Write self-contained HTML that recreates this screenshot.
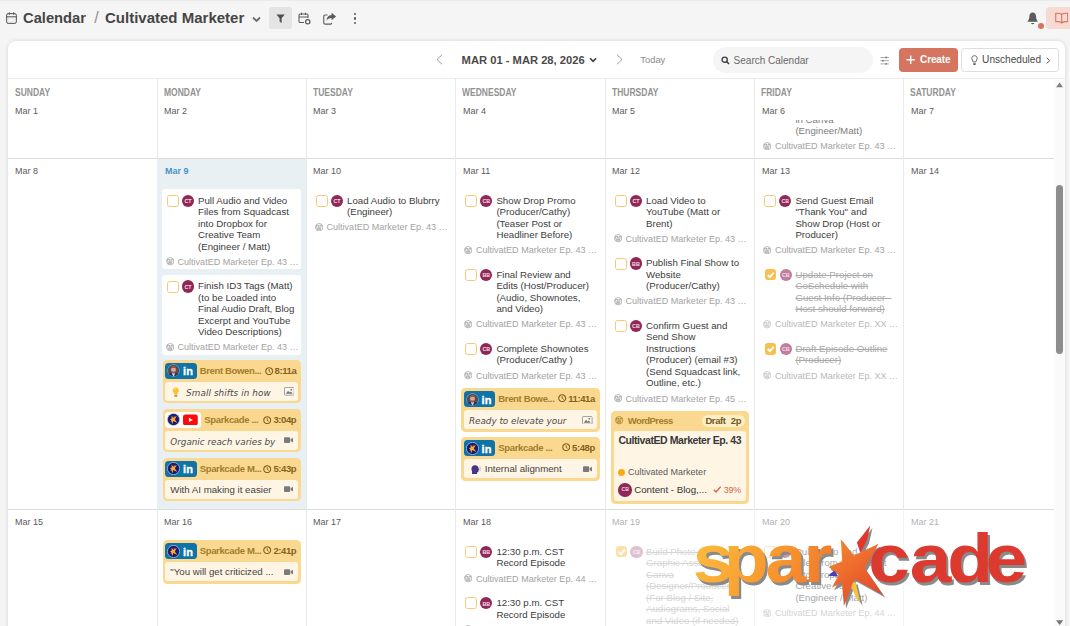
<!DOCTYPE html>
<html lang="en">
<head>
<meta charset="utf-8">
<title>Calendar / Cultivated Marketer</title>
<style>
*{box-sizing:border-box;margin:0;padding:0}
html,body{width:1070px;height:626px;overflow:hidden;background:#f5f5f5;font-family:"Liberation Sans",sans-serif;color:#3b3b3b}
body{position:relative}
.a{position:absolute;white-space:nowrap}
.t{position:absolute;white-space:nowrap;transform-origin:0 0}
#card{left:8px;top:41px;width:1057px;height:600px;background:#fff;border-radius:8px 8px 0 0;box-shadow:0 0 4px rgba(0,0,0,.14)}
.vl{position:absolute;width:1px;background:#e9e9e9;top:79px;height:547px}
.hl{position:absolute;height:1px;background:#dcdcdc;left:8px;width:1046px}
.dow{position:absolute;font-size:10px;font-weight:bold;color:#929292;line-height:10px;white-space:nowrap;transform:scaleX(.85);transform-origin:0 0}
.day{position:absolute;font-size:9.9px;color:#5a5a5a;line-height:10px;white-space:nowrap;transform:scaleX(.91);transform-origin:0 0}
.tk{position:absolute;width:140px}
.cb{position:absolute;left:5px;top:0;width:12px;height:12px;border:1.4px solid #f6c976;border-radius:2.6px;background:#fff}
.cb.on{background:#f9bf4d;border-color:#f9bf4d;left:5.9px;width:11.1px;height:11.3px}
.done .av{left:20.4px}
.av{position:absolute;left:19.8px;top:-.2px;width:12.2px;height:12.2px;border-radius:50%;background:#902857;color:#f3dbe6;font-size:5.4px;line-height:12.2px;padding-top:.3px;text-align:center;font-weight:bold;letter-spacing:-.1px}
.tx{position:absolute;left:36px;top:-.4px;font-size:9.7px;line-height:11.5px;color:#3c3c3c;white-space:nowrap}
.sb{position:absolute;left:15.5px;font-size:9.05px;line-height:10px;color:#a3a3a3;white-space:nowrap}
.wp{position:absolute;left:3.7px;width:8.4px;height:8.4px}
.past .tx{color:#7c7c7c}
.done .tx{color:#a9a9a9;text-decoration:line-through}
.done .av{background:#bd7f9c}
.done .sb{color:#b9b9b9}
.wcard{position:absolute;background:#fff;border-radius:3px;left:162.3px;width:138.7px}
.sc{position:absolute;width:138.6px;height:43.4px;border-radius:4.5px;background:#fbd88f}
.sc .body{position:absolute;left:2.8px;top:22.3px;width:132.9px;height:18.8px;border-radius:3px;background:#fff5e5}
.sc .bdg{position:absolute;left:2.8px;top:3.2px;height:15.6px;border-radius:3.5px}
.sc .nm{position:absolute;top:5.4px;font-size:9.5px;line-height:11px;font-weight:bold;color:#a17d2b;letter-spacing:-.35px;white-space:nowrap}
.sc .tm{position:absolute;right:5px;top:5.4px;font-size:9.5px;line-height:11px;font-weight:bold;color:#83621f;letter-spacing:-.4px;white-space:nowrap}
.sc .bt{position:absolute;top:25.8px;font-size:9.7px;line-height:11.5px;color:#444;white-space:nowrap}
.sc .it{font-family:"DejaVu Sans",sans-serif;font-style:italic;font-size:8.8px;color:#4a4a4a}
</style>
</head>
<body>
<div class="a" style="left:0;top:0;width:1070px;height:1px;background:#ebebeb"></div>
<svg class="a" style="left:6px;top:11.800px;width:11px;height:12px" viewBox="0 0 22 24"><rect x="1.300" y="3.300" width="19.400" height="19.400" rx="3" fill="none" stroke="#505050" stroke-width="2"/><path d="M1.300 9.600h19.400M6.600 .6v5M15.400 .6v5" stroke="#505050" stroke-width="2" fill="none"/><rect x="5" y="12.500" width="12" height="6.500" fill="none" stroke="#e2e2e2" stroke-width="1"/></svg>
<div class="t" style="left:23px;top:7.8px;font-size:15.4px;line-height:20px;font-weight:bold;color:#454545;transform:scaleX(.956)">Calendar</div>
<div class="a" style="left:94.2px;top:7.8px;font-size:16px;line-height:20px;color:#8f8f8f">/</div>
<div class="t" style="left:105.4px;top:7.8px;font-size:15.4px;line-height:20px;font-weight:bold;color:#454545;transform:scaleX(.975)">Cultivated Marketer</div>
<svg class="a" style="left:251.500px;top:15.800px;width:9px;height:6.500px" viewBox="0 0 18 13"><path d="M2 3l7 7 7-7" fill="none" stroke="#6a6a6a" stroke-width="3.6"/></svg>
<div class="a" style="left:269.400px;top:7px;width:22.300px;height:22.200px;background:#e4e4e4;border-radius:2.500px"></div>
<svg class="a" style="left:276.200px;top:13.800px;width:9.200px;height:9.600px" viewBox="0 0 18 19"><path d="M.8 1h16.400L11 8.500V18l-4-3V8.500z" fill="#4f4f4f"/></svg>
<svg class="a" style="left:298.300px;top:11.800px;width:13px;height:13px" viewBox="0 0 26 26"><path d="M12 21H4.500a2.500 2.500 0 0 1-2.500-2.500v-12A2.500 2.500 0 0 1 4.500 4h13A2.500 2.500 0 0 1 20 6.500V12M2 10h18M7 1.500V6M15 1.500V6" fill="none" stroke="#5c5c5c" stroke-width="2.200"/><circle cx="19.500" cy="19.500" r="4.300" fill="#fff" stroke="#5c5c5c" stroke-width="2.600"/></svg>
<svg class="a" style="left:323px;top:12px;width:13.600px;height:12.600px" viewBox="0 0 27 25"><path d="M17 21.500v1a1.500 1.500 0 0 1-1.500 1.500H4A2.500 2.500 0 0 1 1.500 21.500v-13A2.500 2.500 0 0 1 4 6h5" fill="none" stroke="#5c5c5c" stroke-width="2.200"/><path d="M17 1.500 26 9l-9 7.500V12c-5 0-8 1.500-10 5.500C7 11 10.500 6.500 17 6z" fill="#5c5c5c"/></svg>
<div class="a" style="left:353.500px;top:12.6px;width:2.600px;height:2.600px;border-radius:50%;background:#5a5a5a"></div>
<div class="a" style="left:353.500px;top:17.1px;width:2.600px;height:2.600px;border-radius:50%;background:#5a5a5a"></div>
<div class="a" style="left:353.500px;top:21.6px;width:2.600px;height:2.600px;border-radius:50%;background:#5a5a5a"></div>
<svg class="a" style="left:1027px;top:11.700px;width:11.400px;height:13px" viewBox="0 0 23 26"><path d="M11.500 1c-4.500 0-6.800 3.500-6.800 8 0 5-1.700 8-4 10.500h21.600c-2.300-2.500-4-5.500-4-10.500 0-4.500-2.300-8-6.800-8z" fill="#5b5b5f"/><path d="M8.300 22h6.400a3.200 2.500 0 0 1-6.400 0z" fill="#5b5b5f"/></svg>
<div class="a" style="left:1037.800px;top:22.600px;width:6px;height:6px;border-radius:50%;background:#d8735d"></div>
<div class="a" style="left:1046.400px;top:7.100px;width:30px;height:22.400px;border-radius:4px;background:#f6dad3"></div>
<svg class="a" style="left:1054.800px;top:12px;width:13.400px;height:12px" viewBox="0 0 27 24"><path d="M13.500 4.500C10.500 2.500 6 2 1.500 2.500v17c4.500-.5 9 0 12 2 3-2 7.500-2.500 12-2v-17c-4.500-.5-9 0-12 2zM13.500 4.500v19" fill="none" stroke="#d9735e" stroke-width="2.200"/></svg>
<div id="card" class="a"></div>
<div class="hl" style="top:78.200px;left:8px;width:1057px;background:#ebebeb"></div>
<div class="hl" style="top:158px"></div>
<div class="hl" style="top:509px"></div>
<div class="vl" style="left:157px"></div>
<div class="vl" style="left:306px"></div>
<div class="vl" style="left:455px"></div>
<div class="vl" style="left:605px"></div>
<div class="vl" style="left:754px"></div>
<div class="vl" style="left:903px"></div>
<div class="a" style="left:157px;top:159px;width:149px;height:350px;background:#e9f0f4"></div>
<svg class="a" style="left:436px;top:54px;width:7px;height:11px" viewBox="0 0 14 22"><path d="M12 1.500 2 11l10 9.500" fill="none" stroke="#8a8a8a" stroke-width="1.700"/></svg>
<div class="a" style="left:461.6px;top:53.6px;font-size:11.200px;line-height:13px;font-weight:bold;color:#4a4a4a">MAR 01 - MAR 28, 2026</div>
<svg class="a" style="left:589px;top:57.300px;width:8.200px;height:6px" viewBox="0 0 16 12"><path d="M2 2.500l6 6 6-6" fill="none" stroke="#3e3e3e" stroke-width="3.200"/></svg>
<svg class="a" style="left:616px;top:54px;width:7px;height:11px" viewBox="0 0 14 22"><path d="M2 1.500 12 11 2 20.500" fill="none" stroke="#8a8a8a" stroke-width="1.700"/></svg>
<div class="a" style="left:640.3px;top:54.3px;font-size:9.400px;line-height:11px;color:#8c8c8c">Today</div>
<div class="a" style="left:713px;top:47.100px;width:160px;height:25.800px;border-radius:13px;background:#f5f5f5"></div>
<svg class="a" style="left:721px;top:56.200px;width:8.800px;height:8.800px" viewBox="0 0 18 18"><circle cx="7.500" cy="7.500" r="5.300" fill="none" stroke="#3f3f3f" stroke-width="2.800"/><path d="M11.500 11.500l5 5" stroke="#3f3f3f" stroke-width="3" fill="none"/></svg>
<div class="a" style="left:733.6px;top:55.3px;font-size:10px;line-height:12px;color:#6a6a6a">Search Calendar</div>
<svg class="a" style="left:879.600px;top:55.600px;width:9.800px;height:9.400px" viewBox="0 0 20 19"><path d="M1 3h18M1 9.500h18M1 16h18" stroke="#8a8a8a" stroke-width="1.500" fill="none"/><path d="M12.500 1v4M6 7.500v4M12.500 14v4" stroke="#6a6a6a" stroke-width="2.200" fill="none"/></svg>
<div class="a" style="left:899px;top:48px;width:58.800px;height:23.800px;border-radius:4px;background:#d5745f"></div>
<svg class="a" style="left:906.400px;top:55.300px;width:9.400px;height:9.400px" viewBox="0 0 19 19"><path d="M9.500 1v17M1 9.500h17" stroke="#fff" stroke-width="2.800" fill="none"/></svg>
<div class="a" style="left:920.1px;top:54px;font-size:10px;line-height:12px;font-weight:bold;color:#fff;letter-spacing:-.15px">Create</div>
<div class="a" style="left:961.200px;top:48.300px;width:97.600px;height:23.300px;border-radius:3.500px;background:#fff;border:1px solid #dedede"></div>
<svg class="a" style="left:970.800px;top:54.600px;width:7px;height:10.800px" viewBox="0 0 14 22"><path d="M7 1.500C3.500 1.500 1.500 4 1.500 7c0 2.800 2.200 4 2.700 7h5.600c.5-3 2.700-4.200 2.700-7 0-3-2-5.500-5.500-5.500z" fill="none" stroke="#555" stroke-width="1.800"/><path d="M4.500 17h5v1.500a2.500 2.500 0 0 1-5 0z" fill="#555"/></svg>
<div class="a" style="left:982.1px;top:54px;font-size:10.100px;line-height:12px;color:#484848">Unscheduled</div>
<svg class="a" style="left:1046.400px;top:57.200px;width:4.400px;height:7.200px" viewBox="0 0 9 15"><path d="M1.500 1.500l6 6-6 6" fill="none" stroke="#4a4a4a" stroke-width="2"/></svg>
<div class="a past" style="left:755px;top:120.3px;width:149px;height:37.7px;overflow:hidden"><div style="position:absolute;left:-755px;top:-120.3px">
<div class="tk" style="left:759.4px;top:102.4px;height:56.5px">
<div class="cb"></div><div class="av">CT</div>
<div class="tx">&nbsp;<br>in Canva<br>(Engineer/Matt)</div>
<svg class="wp" style="top:39.6px" viewBox="0 0 16 16"><circle cx="8" cy="8" r="7" fill="none" stroke="#adadad" stroke-width="1.7"/><path d="M2.6 5.4 5.6 13.4 7.9 8 6.3 4.6M6.2 4.6 9.6 13.4 11.6 7.4 10.6 4.6M1.8 5h5.4M8.6 5h4.6" fill="none" stroke="#adadad" stroke-width="1.7"/></svg>
<div class="sb" style="top:38.9px">CultivatED Marketer Ep. 43 …</div>
</div>
</div></div>
<div class="dow" style="left:14.8px;top:88.400px">SUNDAY</div>
<div class="day" style="left:15.2px;top:105.700px">Mar 1</div>
<div class="dow" style="left:163.8px;top:88.400px">MONDAY</div>
<div class="day" style="left:164.2px;top:105.700px">Mar 2</div>
<div class="dow" style="left:312.8px;top:88.400px">TUESDAY</div>
<div class="day" style="left:313.2px;top:105.700px">Mar 3</div>
<div class="dow" style="left:462.2px;top:88.400px">WEDNESDAY</div>
<div class="day" style="left:462.59999999999997px;top:105.700px">Mar 4</div>
<div class="dow" style="left:611.8px;top:88.400px">THURSDAY</div>
<div class="day" style="left:612.2px;top:105.700px">Mar 5</div>
<div class="dow" style="left:761.1999999999999px;top:88.400px">FRIDAY</div>
<div class="day" style="left:761.6px;top:105.700px">Mar 6</div>
<div class="dow" style="left:910.4px;top:88.400px">SATURDAY</div>
<div class="day" style="left:910.8000000000001px;top:105.700px">Mar 7</div>
<div class="day" style="left:15.2px;top:165.900px">Mar 8</div>
<div class="day" style="left:15.2px;top:517.100px">Mar 15</div>
<div class="day" style="left:164.6px;top:166.200px;font-weight:bold;color:#4b93c4">Mar 9</div>
<div class="day" style="left:164.2px;top:517.100px">Mar 16</div>
<div class="day" style="left:313.2px;top:165.900px">Mar 10</div>
<div class="day" style="left:313.2px;top:517.100px">Mar 17</div>
<div class="day" style="left:462.59999999999997px;top:165.900px">Mar 11</div>
<div class="day" style="left:462.59999999999997px;top:517.100px">Mar 18</div>
<div class="day" style="left:612.2px;top:165.900px">Mar 12</div>
<div class="day" style="left:612.2px;top:517.100px">Mar 19</div>
<div class="day" style="left:761.6px;top:165.900px">Mar 13</div>
<div class="day" style="left:761.6px;top:517.100px">Mar 20</div>
<div class="day" style="left:910.8000000000001px;top:165.900px">Mar 14</div>
<div class="day" style="left:910.8000000000001px;top:517.100px">Mar 21</div>
<div class="wcard" style="top:189.200px;height:79.500px"></div>
<div class="wcard" style="top:275px;height:79.700px"></div>
<div class="tk" style="left:162px;top:194.9px;height:79.5px">
<div class="cb"></div><div class="av">CT</div>
<div class="tx">Pull Audio and Video<br>Files from Squadcast<br>into Dropbox for<br>Creative Team<br>(Engineer / Matt)</div>
<svg class="wp" style="top:62.6px" viewBox="0 0 16 16"><circle cx="8" cy="8" r="7" fill="none" stroke="#adadad" stroke-width="1.7"/><path d="M2.6 5.4 5.6 13.4 7.9 8 6.3 4.6M6.2 4.6 9.6 13.4 11.6 7.4 10.6 4.6M1.8 5h5.4M8.6 5h4.6" fill="none" stroke="#adadad" stroke-width="1.7"/></svg>
<div class="sb" style="top:61.9px">CultivatED Marketer Ep. 43 …</div>
</div>
<div class="tk" style="left:162px;top:280.6px;height:79.5px">
<div class="cb"></div><div class="av">CT</div>
<div class="tx">Finish ID3 Tags (Matt)<br>(to be Loaded into<br>Final Audio Draft, Blog<br>Excerpt and YouTube<br>Video Descriptions)</div>
<svg class="wp" style="top:62.6px" viewBox="0 0 16 16"><circle cx="8" cy="8" r="7" fill="none" stroke="#adadad" stroke-width="1.7"/><path d="M2.6 5.4 5.6 13.4 7.9 8 6.3 4.6M6.2 4.6 9.6 13.4 11.6 7.4 10.6 4.6M1.8 5h5.4M8.6 5h4.6" fill="none" stroke="#adadad" stroke-width="1.7"/></svg>
<div class="sb" style="top:61.9px">CultivatED Marketer Ep. 43 …</div>
</div>
<div class="sc" style="left:162.7px;top:359.8px">
<div class="bdg" style="width:31.4px;background:#0e73a8">
<svg style="position:absolute;left:1.6px;top:1.3px;width:13px;height:13px" viewBox="0 0 26 26"><defs><clipPath id="cp522"><circle cx="13" cy="13" r="11.400"/></clipPath></defs><circle cx="13" cy="13" r="12.3" fill="#9fb2c6"/><g clip-path="url(#cp522)"><rect x="0" y="0" width="26" height="26" fill="#5b4c4f"/><path d="M0 26C1 19 5 17.5 13 17.500s12 1.500 13 8.500z" fill="#2c2d52"/><path d="M9.500 18.500 13 26l3.500-7.500z" fill="#c4d9f1"/><ellipse cx="13" cy="11" rx="4.700" ry="6.300" fill="#dfa69e"/><path d="M8.300 9.500C8.300 3 17.700 3 17.700 9.500 16 7 10 7 8.300 9.500z" fill="#6a5048"/><path d="M8.800 13.500c1.200 2 7.200 2 8.400 0-.2 3.500-2 5-4.200 5s-4-1.500-4.200-5z" fill="#8d5b58"/></g></svg>
<div class="a" style="left:17.4px;top:1.2px;font-size:11px;line-height:15px;font-weight:bold;color:#fff;letter-spacing:.3px;-webkit-text-stroke:.35px #fff">in</div>
</div>
<div class="nm" style="left:37px;top:5.4px">Brent Bowen...</div>
<div class="tm" style="top:5.4px"><svg viewBox="0 0 16 16" style="width:8.4px;height:8.4px;vertical-align:-0.9px;margin-right:1.6px"><circle cx="8" cy="8" r="6.600" fill="none" stroke="#83621f" stroke-width="2.1"/><path d="M8 4.200V8.300l2.700 1.900" fill="none" stroke="#83621f" stroke-width="1.9"/></svg>8:11a</div>
<div class="body"></div>
<svg style="position:absolute;left:9.6px;top:27.2px;width:7.6px;height:10.6px" viewBox="0 0 15 21"><path d="M7.500 1C3.800 1 1.500 3.800 1.500 6.800c0 2.400 1.500 3.600 2.300 5 .5.900.6 1.600.7 2.400h6c.1-.8.200-1.500.7-2.400.8-1.400 2.300-2.600 2.300-5C13.500 3.800 11.200 1 7.500 1z" fill="#fbc02d"/><path d="M5 5.500c.5-1.300 1.500-2 3-2.200" stroke="#fff3c4" stroke-width="1.300" fill="none"/><rect x="4.600" y="15" width="5.800" height="4.600" rx="1.400" fill="#b9a27a"/></svg>
<div class="bt it" style="left:23.4px;top:28.2px"><span style="letter-spacing:.1px">Small shifts in how</span></div>
<svg style="position:absolute;left:120.900px;top:27.500px;width:10.600px;height:8.600px" viewBox="0 0 21 17"><rect x=".9" y=".9" width="19.200" height="15.200" rx="1.500" fill="#fdf8ee" stroke="#8d8d8d" stroke-width="1.600"/><path d="M3.500 13.500 8 7.500l3 3.500 2.500-2 4 4.500z" fill="#777"/><circle cx="14.500" cy="5.200" r="1.700" fill="#777"/></svg>
</div>
<div class="sc" style="left:162.7px;top:408.8px">
<div class="bdg" style="width:36px;background:#fff">
<svg style="position:absolute;left:1.6px;top:1.3px;width:13px;height:13px" viewBox="0 0 26 26"><circle cx="13" cy="13" r="12.2" fill="#1b1a70" stroke="#cfd8ee" stroke-width="1.3"/><polygon transform="translate(-34.6,-1.6) scale(.272)" points="160.7 24 173.5 40.7 198.6 28.8 184.7 53.5 203 79.9 174.3 63.9 163.9 91 161.9 67 151.9 72.7 159.1 59 148.4 51.9 162.3 46.3" fill="#f9ae2e"/><polygon transform="translate(-35.6,.6) scale(.272)" points="190.3 14 178.900 27.500 181.400 36 186.800 25.600" fill="#ef5a2a"/></svg>
<svg style="position:absolute;left:17.5px;top:1.6px;width:14.8px;height:11.8px" viewBox="0 0 30 24"><rect x="0" y="1" width="30" height="22" rx="4.500" fill="#fd0a0a"/><path d="M12 7.500v9l8-4.500z" fill="#fff"/></svg>
</div>
<div class="nm" style="left:41.6px;top:5.4px">Sparkcade ...</div>
<div class="tm" style="top:5.4px"><svg viewBox="0 0 16 16" style="width:8.4px;height:8.4px;vertical-align:-0.9px;margin-right:1.6px"><circle cx="8" cy="8" r="6.600" fill="none" stroke="#83621f" stroke-width="2.1"/><path d="M8 4.200V8.300l2.700 1.900" fill="none" stroke="#83621f" stroke-width="1.9"/></svg>3:04p</div>
<div class="body"></div>
<div class="bt it" style="left:7.6px;top:28.2px">Organic reach varies by</div>
<svg style="position:absolute;left:121.300px;top:28.600px;width:9.400px;height:6.200px" viewBox="0 0 19 12"><rect x="0" y="0" width="12.500" height="12" rx="2.200" fill="#7a7a7a"/><path d="M13.500 4.200 19 .8v10.400l-5.500-3.400z" fill="#7a7a7a"/></svg>
</div>
<div class="sc" style="left:162.7px;top:457.8px">
<div class="bdg" style="width:31.4px;background:#0e73a8">
<svg style="position:absolute;left:1.6px;top:1.3px;width:13px;height:13px" viewBox="0 0 26 26"><circle cx="13" cy="13" r="12.2" fill="#1b1a70" stroke="#cfd8ee" stroke-width="1.3"/><polygon transform="translate(-34.6,-1.6) scale(.272)" points="160.7 24 173.5 40.7 198.6 28.8 184.7 53.5 203 79.9 174.3 63.9 163.9 91 161.9 67 151.9 72.7 159.1 59 148.4 51.9 162.3 46.3" fill="#f9ae2e"/><polygon transform="translate(-35.6,.6) scale(.272)" points="190.3 14 178.900 27.500 181.400 36 186.800 25.600" fill="#ef5a2a"/></svg>
<div class="a" style="left:17.4px;top:1.2px;font-size:11px;line-height:15px;font-weight:bold;color:#fff;letter-spacing:.3px;-webkit-text-stroke:.35px #fff">in</div>
</div>
<div class="nm" style="left:37px;top:5.4px">Sparkcade M...</div>
<div class="tm" style="top:5.4px"><svg viewBox="0 0 16 16" style="width:8.4px;height:8.4px;vertical-align:-0.9px;margin-right:1.6px"><circle cx="8" cy="8" r="6.600" fill="none" stroke="#83621f" stroke-width="2.1"/><path d="M8 4.200V8.300l2.700 1.900" fill="none" stroke="#83621f" stroke-width="1.9"/></svg>5:43p</div>
<div class="body"></div>
<div class="bt" style="left:7.6px;top:25.8px">With AI making it easier</div>
<svg style="position:absolute;left:121.300px;top:28.600px;width:9.400px;height:6.200px" viewBox="0 0 19 12"><rect x="0" y="0" width="12.500" height="12" rx="2.200" fill="#7a7a7a"/><path d="M13.500 4.200 19 .8v10.400l-5.500-3.400z" fill="#7a7a7a"/></svg>
</div>
<div class="tk" style="left:311px;top:194.9px;height:45.0px">
<div class="cb"></div><div class="av">CT</div>
<div class="tx">Load Audio to Blubrry<br>(Engineer)</div>
<svg class="wp" style="top:28.1px" viewBox="0 0 16 16"><circle cx="8" cy="8" r="7" fill="none" stroke="#adadad" stroke-width="1.7"/><path d="M2.6 5.4 5.6 13.4 7.9 8 6.3 4.6M6.2 4.6 9.6 13.4 11.6 7.4 10.6 4.6M1.8 5h5.4M8.6 5h4.6" fill="none" stroke="#adadad" stroke-width="1.7"/></svg>
<div class="sb" style="top:27.4px">CultivatED Marketer Ep. 43 …</div>
</div>
<div class="tk" style="left:460.4px;top:194.9px;height:68.0px">
<div class="cb"></div><div class="av">CB</div>
<div class="tx">Show Drop Promo<br>(Producer/Cathy)<br>(Teaser Post or<br>Headliner Before)</div>
<svg class="wp" style="top:51.1px" viewBox="0 0 16 16"><circle cx="8" cy="8" r="7" fill="none" stroke="#adadad" stroke-width="1.7"/><path d="M2.6 5.4 5.6 13.4 7.9 8 6.3 4.6M6.2 4.6 9.6 13.4 11.6 7.4 10.6 4.6M1.8 5h5.4M8.6 5h4.6" fill="none" stroke="#adadad" stroke-width="1.7"/></svg>
<div class="sb" style="top:50.4px">CultivatED Marketer Ep. 43 …</div>
</div>
<div class="tk" style="left:460.4px;top:269.1px;height:68.0px">
<div class="cb"></div><div class="av">BB</div>
<div class="tx">Final Review and<br>Edits (Host/Producer)<br>(Audio, Shownotes,<br>and Video)</div>
<svg class="wp" style="top:51.1px" viewBox="0 0 16 16"><circle cx="8" cy="8" r="7" fill="none" stroke="#adadad" stroke-width="1.7"/><path d="M2.6 5.4 5.6 13.4 7.9 8 6.3 4.6M6.2 4.6 9.6 13.4 11.6 7.4 10.6 4.6M1.8 5h5.4M8.6 5h4.6" fill="none" stroke="#adadad" stroke-width="1.7"/></svg>
<div class="sb" style="top:50.4px">CultivatED Marketer Ep. 43 …</div>
</div>
<div class="tk" style="left:460.4px;top:343.3px;height:45.0px">
<div class="cb"></div><div class="av">CB</div>
<div class="tx">Complete Shownotes<br>(Producer/Cathy )</div>
<svg class="wp" style="top:28.1px" viewBox="0 0 16 16"><circle cx="8" cy="8" r="7" fill="none" stroke="#adadad" stroke-width="1.7"/><path d="M2.6 5.4 5.6 13.4 7.9 8 6.3 4.6M6.2 4.6 9.6 13.4 11.6 7.4 10.6 4.6M1.8 5h5.4M8.6 5h4.6" fill="none" stroke="#adadad" stroke-width="1.7"/></svg>
<div class="sb" style="top:27.4px">CultivatED Marketer Ep. 43 …</div>
</div>
<div class="sc" style="left:461.3px;top:388.2px">
<div class="bdg" style="width:31.4px;background:#0e73a8">
<svg style="position:absolute;left:1.6px;top:1.3px;width:13px;height:13px" viewBox="0 0 26 26"><defs><clipPath id="cp849"><circle cx="13" cy="13" r="11.400"/></clipPath></defs><circle cx="13" cy="13" r="12.3" fill="#9fb2c6"/><g clip-path="url(#cp849)"><rect x="0" y="0" width="26" height="26" fill="#5b4c4f"/><path d="M0 26C1 19 5 17.5 13 17.500s12 1.500 13 8.500z" fill="#2c2d52"/><path d="M9.500 18.500 13 26l3.500-7.500z" fill="#c4d9f1"/><ellipse cx="13" cy="11" rx="4.700" ry="6.300" fill="#dfa69e"/><path d="M8.300 9.500C8.300 3 17.700 3 17.700 9.500 16 7 10 7 8.300 9.500z" fill="#6a5048"/><path d="M8.800 13.500c1.200 2 7.200 2 8.400 0-.2 3.500-2 5-4.200 5s-4-1.500-4.200-5z" fill="#8d5b58"/></g></svg>
<div class="a" style="left:17.4px;top:1.2px;font-size:11px;line-height:15px;font-weight:bold;color:#fff;letter-spacing:.3px;-webkit-text-stroke:.35px #fff">in</div>
</div>
<div class="nm" style="left:37px;top:4.4px">Brent Bowe...</div>
<div class="tm" style="top:4.4px"><svg viewBox="0 0 16 16" style="width:8.4px;height:8.4px;vertical-align:-0.9px;margin-right:1.6px"><circle cx="8" cy="8" r="6.600" fill="none" stroke="#83621f" stroke-width="2.1"/><path d="M8 4.200V8.300l2.700 1.900" fill="none" stroke="#83621f" stroke-width="1.9"/></svg>11:41a</div>
<div class="body"></div>
<div class="bt it" style="left:7.6px;top:28.2px">Ready to elevate your</div>
<svg style="position:absolute;left:120.900px;top:27.500px;width:10.600px;height:8.600px" viewBox="0 0 21 17"><rect x=".9" y=".9" width="19.200" height="15.200" rx="1.500" fill="#fdf8ee" stroke="#8d8d8d" stroke-width="1.600"/><path d="M3.500 13.500 8 7.500l3 3.500 2.500-2 4 4.500z" fill="#777"/><circle cx="14.500" cy="5.200" r="1.700" fill="#777"/></svg>
</div>
<div class="sc" style="left:461.3px;top:437.2px">
<div class="bdg" style="width:31.4px;background:#0e73a8">
<svg style="position:absolute;left:1.6px;top:1.3px;width:13px;height:13px" viewBox="0 0 26 26"><circle cx="13" cy="13" r="12.2" fill="#1b1a70" stroke="#cfd8ee" stroke-width="1.3"/><polygon transform="translate(-34.6,-1.6) scale(.272)" points="160.7 24 173.5 40.7 198.6 28.8 184.7 53.5 203 79.9 174.3 63.9 163.9 91 161.9 67 151.9 72.7 159.1 59 148.4 51.9 162.3 46.3" fill="#f9ae2e"/><polygon transform="translate(-35.6,.6) scale(.272)" points="190.3 14 178.900 27.500 181.400 36 186.800 25.600" fill="#ef5a2a"/></svg>
<div class="a" style="left:17.4px;top:1.2px;font-size:11px;line-height:15px;font-weight:bold;color:#fff;letter-spacing:.3px;-webkit-text-stroke:.35px #fff">in</div>
</div>
<div class="nm" style="left:37px;top:4.4px">Sparkcade ...</div>
<div class="tm" style="top:4.4px"><svg viewBox="0 0 16 16" style="width:8.4px;height:8.4px;vertical-align:-0.9px;margin-right:1.6px"><circle cx="8" cy="8" r="6.600" fill="none" stroke="#83621f" stroke-width="2.1"/><path d="M8 4.200V8.300l2.700 1.900" fill="none" stroke="#83621f" stroke-width="1.9"/></svg>5:48p</div>
<div class="body"></div>
<svg style="position:absolute;left:9.400px;top:26.600px;width:10px;height:10px" viewBox="0 0 20 20"><path d="M2 20c0-3 .5-4.500-.5-7C.2 9.500 1 3.500 7 2.500c5-.8 8 2.500 8 6l1.500 3-1.500.7V15c0 1.200-1 1.500-2.500 1.300L12 20z" fill="#45348a"/><path d="M16.500 7l3-1M17 9.500h3M16.500 12l3 1" stroke="#8f86c0" stroke-width="1.200" fill="none"/></svg>
<div class="bt" style="left:23.4px;top:25.8px">Internal alignment</div>
<svg style="position:absolute;left:121.300px;top:28.600px;width:9.400px;height:6.200px" viewBox="0 0 19 12"><rect x="0" y="0" width="12.500" height="12" rx="2.200" fill="#7a7a7a"/><path d="M13.500 4.200 19 .8v10.400l-5.500-3.400z" fill="#7a7a7a"/></svg>
</div>
<div class="tk" style="left:610px;top:194.9px;height:56.5px">
<div class="cb"></div><div class="av">CT</div>
<div class="tx">Load Video to<br>YouTube (Matt or<br>Brent)</div>
<svg class="wp" style="top:39.6px" viewBox="0 0 16 16"><circle cx="8" cy="8" r="7" fill="none" stroke="#adadad" stroke-width="1.7"/><path d="M2.6 5.4 5.6 13.4 7.9 8 6.3 4.6M6.2 4.6 9.6 13.4 11.6 7.4 10.6 4.6M1.8 5h5.4M8.6 5h4.6" fill="none" stroke="#adadad" stroke-width="1.7"/></svg>
<div class="sb" style="top:38.9px">CultivatED Marketer Ep. 43 …</div>
</div>
<div class="tk" style="left:610px;top:257.6px;height:56.5px">
<div class="cb"></div><div class="av">BB</div>
<div class="tx">Publish Final Show to<br>Website<br>(Producer/Cathy)</div>
<svg class="wp" style="top:39.6px" viewBox="0 0 16 16"><circle cx="8" cy="8" r="7" fill="none" stroke="#adadad" stroke-width="1.7"/><path d="M2.6 5.4 5.6 13.4 7.9 8 6.3 4.6M6.2 4.6 9.6 13.4 11.6 7.4 10.6 4.6M1.8 5h5.4M8.6 5h4.6" fill="none" stroke="#adadad" stroke-width="1.7"/></svg>
<div class="sb" style="top:38.9px">CultivatED Marketer Ep. 43 …</div>
</div>
<div class="tk" style="left:610px;top:320.3px;height:91.0px">
<div class="cb"></div><div class="av">CB</div>
<div class="tx">Confirm Guest and<br>Send Show<br>Instructions<br>(Producer) (email #3)<br>(Send Squadcast link,<br>Outline, etc.)</div>
<svg class="wp" style="top:74.1px" viewBox="0 0 16 16"><circle cx="8" cy="8" r="7" fill="none" stroke="#adadad" stroke-width="1.7"/><path d="M2.6 5.4 5.6 13.4 7.9 8 6.3 4.6M6.2 4.6 9.6 13.4 11.6 7.4 10.6 4.6M1.8 5h5.4M8.6 5h4.6" fill="none" stroke="#adadad" stroke-width="1.7"/></svg>
<div class="sb" style="top:73.4px">CultivatED Marketer Ep. 45 …</div>
</div>
<div class="a" style="left:610.900px;top:411px;width:138.400px;height:93px;border-radius:4.500px;background:#fbd88f"></div>
<div class="a" style="left:614px;top:430.700px;width:132.300px;height:70.300px;border-radius:3px;background:#fff5e5"></div>
<svg class="a" style="left:615.300px;top:416.300px;width:8.400px;height:8.400px" viewBox="0 0 16 16"><circle cx="8" cy="8" r="7" fill="none" stroke="#a17d2b" stroke-width="1.400"/><path d="M2.600 5.400 5.600 13.400 7.900 8 6.300 4.600M6.200 4.600 9.600 13.400 11.600 7.400 10.600 4.600M1.800 5h5.400M8.600 5h4.600" fill="none" stroke="#a17d2b" stroke-width="1.400"/></svg>
<div class="a" style="left:627.7px;top:414.8px;font-size:9.500px;line-height:11px;font-weight:bold;color:#a17d2b;letter-spacing:-.55px">WordPress</div>
<div class="a" style="left:701.500px;top:414.900px;width:43px;height:11.800px;border-radius:6px;background:#fdeec4"></div>
<div class="a" style="left:705.4px;top:415.3px;font-size:9.500px;line-height:11px;font-weight:bold;color:#6e5a26;letter-spacing:-.4px">Draft</div>
<div class="a" style="left:730.8px;top:415.3px;font-size:9.500px;line-height:11px;font-weight:bold;color:#6e5a26;letter-spacing:-.4px">2p</div>
<div class="a" style="left:618.4px;top:434.4px;font-size:10.500px;line-height:12px;font-weight:bold;color:#383838;letter-spacing:-.42px">CultivatED Marketer Ep. 43</div>
<div class="a" style="left:618.100px;top:468.500px;width:7px;height:7px;border-radius:50%;background:#fba919"></div>
<div class="a" style="left:628.1px;top:466.8px;font-size:9px;line-height:11px;color:#5a5a5a">Cultivated Marketer</div>
<div class="a" style="left:618.400px;top:483.200px;width:13.500px;height:13.500px;border-radius:50%;background:#902857;color:#f0d2df;font-size:5.200px;line-height:13.500px;text-align:center;font-weight:bold">CB</div>
<div class="a" style="left:634.2px;top:484px;font-size:9.700px;line-height:12px;color:#333">Content - Blog,...</div>
<svg class="a" style="left:713.300px;top:486px;width:8.400px;height:7px" viewBox="0 0 17 14"><path d="M1.500 7.500 6 12 15.500 1.500" fill="none" stroke="#d5644c" stroke-width="2.800"/></svg>
<div class="a" style="left:723.8px;top:485px;font-size:8.900px;line-height:11px;color:#d5644c;letter-spacing:-.2px">39%</div>
<div class="tk" style="left:759.4px;top:194.9px;height:68.0px">
<div class="cb"></div><div class="av">CB</div>
<div class="tx">Send Guest Email<br>"Thank You" and<br>Show Drop (Host or<br>Producer)</div>
<svg class="wp" style="top:51.1px" viewBox="0 0 16 16"><circle cx="8" cy="8" r="7" fill="none" stroke="#adadad" stroke-width="1.7"/><path d="M2.6 5.4 5.6 13.4 7.9 8 6.3 4.6M6.2 4.6 9.6 13.4 11.6 7.4 10.6 4.6M1.8 5h5.4M8.6 5h4.6" fill="none" stroke="#adadad" stroke-width="1.7"/></svg>
<div class="sb" style="top:50.4px">CultivatED Marketer Ep. 43 …</div>
</div>
<div class="tk done" style="left:759.4px;top:269.1px;height:68.0px">
<div class="cb on"><svg viewBox="0 0 12 12" style="position:absolute;left:-1.4px;top:-1.4px;width:11.6px;height:11.6px"><path d="M2.8 6.2 5 8.4 9.2 3.8" fill="none" stroke="#fff" stroke-width="1.9"/></svg></div><div class="av">CB</div>
<div class="tx">Update Project on<br>CoSchedule with<br>Guest Info (Producer -<br>Host should forward)</div>
<svg class="wp" style="top:51.1px" viewBox="0 0 16 16"><circle cx="8" cy="8" r="7" fill="none" stroke="#c8c8c8" stroke-width="1.7"/><path d="M2.6 5.4 5.6 13.4 7.9 8 6.3 4.6M6.2 4.6 9.6 13.4 11.6 7.4 10.6 4.6M1.8 5h5.4M8.6 5h4.6" fill="none" stroke="#c8c8c8" stroke-width="1.7"/></svg>
<div class="sb" style="top:50.4px">CultivatED Marketer Ep. XX …</div>
</div>
<div class="tk done" style="left:759.4px;top:343.3px;height:45.0px">
<div class="cb on"><svg viewBox="0 0 12 12" style="position:absolute;left:-1.4px;top:-1.4px;width:11.6px;height:11.6px"><path d="M2.8 6.2 5 8.4 9.2 3.8" fill="none" stroke="#fff" stroke-width="1.9"/></svg></div><div class="av">CB</div>
<div class="tx">Draft Episode Outline<br>(Producer)</div>
<svg class="wp" style="top:28.1px" viewBox="0 0 16 16"><circle cx="8" cy="8" r="7" fill="none" stroke="#c8c8c8" stroke-width="1.7"/><path d="M2.6 5.4 5.6 13.4 7.9 8 6.3 4.6M6.2 4.6 9.6 13.4 11.6 7.4 10.6 4.6M1.8 5h5.4M8.6 5h4.6" fill="none" stroke="#c8c8c8" stroke-width="1.7"/></svg>
<div class="sb" style="top:27.4px">CultivatED Marketer Ep. XX …</div>
</div>
<div class="sc" style="left:162.7px;top:540.2px">
<div class="bdg" style="width:31.4px;background:#0e73a8">
<svg style="position:absolute;left:1.6px;top:1.3px;width:13px;height:13px" viewBox="0 0 26 26"><circle cx="13" cy="13" r="12.2" fill="#1b1a70" stroke="#cfd8ee" stroke-width="1.3"/><polygon transform="translate(-34.6,-1.6) scale(.272)" points="160.7 24 173.5 40.7 198.6 28.8 184.7 53.5 203 79.9 174.3 63.9 163.9 91 161.9 67 151.9 72.7 159.1 59 148.4 51.9 162.3 46.3" fill="#f9ae2e"/><polygon transform="translate(-35.6,.6) scale(.272)" points="190.3 14 178.900 27.500 181.400 36 186.800 25.600" fill="#ef5a2a"/></svg>
<div class="a" style="left:17.4px;top:1.2px;font-size:11px;line-height:15px;font-weight:bold;color:#fff;letter-spacing:.3px;-webkit-text-stroke:.35px #fff">in</div>
</div>
<div class="nm" style="left:37px;top:4.4px">Sparkcade M...</div>
<div class="tm" style="top:4.4px"><svg viewBox="0 0 16 16" style="width:8.4px;height:8.4px;vertical-align:-0.9px;margin-right:1.6px"><circle cx="8" cy="8" r="6.600" fill="none" stroke="#83621f" stroke-width="2.1"/><path d="M8 4.200V8.300l2.700 1.900" fill="none" stroke="#83621f" stroke-width="1.9"/></svg>2:41p</div>
<div class="body"></div>
<div class="bt" style="left:7.6px;top:25.8px">"You will get criticized ...</div>
<svg style="position:absolute;left:121.300px;top:28.600px;width:9.400px;height:6.200px" viewBox="0 0 19 12"><rect x="0" y="0" width="12.500" height="12" rx="2.200" fill="#7a7a7a"/><path d="M13.500 4.200 19 .8v10.400l-5.500-3.400z" fill="#7a7a7a"/></svg>
</div>
<div class="tk" style="left:460.4px;top:546.2px;height:45.0px">
<div class="cb"></div><div class="av">BB</div>
<div class="tx">12:30 p.m. CST<br>Record Episode</div>
<svg class="wp" style="top:28.1px" viewBox="0 0 16 16"><circle cx="8" cy="8" r="7" fill="none" stroke="#adadad" stroke-width="1.7"/><path d="M2.6 5.4 5.6 13.4 7.9 8 6.3 4.6M6.2 4.6 9.6 13.4 11.6 7.4 10.6 4.6M1.8 5h5.4M8.6 5h4.6" fill="none" stroke="#adadad" stroke-width="1.7"/></svg>
<div class="sb" style="top:27.4px">CultivatED Marketer Ep. 44 …</div>
</div>
<div class="tk" style="left:460.4px;top:597.4000000000001px;height:45.0px">
<div class="cb"></div><div class="av">BB</div>
<div class="tx">12:30 p.m. CST<br>Record Episode</div>
<svg class="wp" style="top:28.1px" viewBox="0 0 16 16"><circle cx="8" cy="8" r="7" fill="none" stroke="#adadad" stroke-width="1.7"/><path d="M2.6 5.4 5.6 13.4 7.9 8 6.3 4.6M6.2 4.6 9.6 13.4 11.6 7.4 10.6 4.6M1.8 5h5.4M8.6 5h4.6" fill="none" stroke="#adadad" stroke-width="1.7"/></svg>
<div class="sb" style="top:27.4px">CultivatED Marketer Ep. 44 …</div>
</div>
<div class="tk done" style="left:610px;top:546.2px;height:102.5px">
<div class="cb on"><svg viewBox="0 0 12 12" style="position:absolute;left:-1.4px;top:-1.4px;width:11.6px;height:11.6px"><path d="M2.8 6.2 5 8.4 9.2 3.8" fill="none" stroke="#fff" stroke-width="1.9"/></svg></div><div class="av">CB</div>
<div class="tx">Build Photo and<br>Graphic Assets in<br>Canva<br>(Designer/Producer)<br>(For Blog / Site,<br>Audiograms, Social<br>and Video (if needed)</div>
<svg class="wp" style="top:85.6px" viewBox="0 0 16 16"><circle cx="8" cy="8" r="7" fill="none" stroke="#c8c8c8" stroke-width="1.7"/><path d="M2.6 5.4 5.6 13.4 7.9 8 6.3 4.6M6.2 4.6 9.6 13.4 11.6 7.4 10.6 4.6M1.8 5h5.4M8.6 5h4.6" fill="none" stroke="#c8c8c8" stroke-width="1.7"/></svg>
<div class="sb" style="top:84.9px">CultivatED Marketer Ep. 44 …</div>
</div>
<div class="tk" style="left:759.4px;top:546.2px;height:79.5px">
<div class="cb"></div><div class="av">CT</div>
<div class="tx">Pull Audio and Video<br>Files from Squadcast<br>into Dropbox for<br>Creative Team<br>(Engineer / Matt)</div>
<svg class="wp" style="top:62.6px" viewBox="0 0 16 16"><circle cx="8" cy="8" r="7" fill="none" stroke="#adadad" stroke-width="1.7"/><path d="M2.6 5.4 5.6 13.4 7.9 8 6.3 4.6M6.2 4.6 9.6 13.4 11.6 7.4 10.6 4.6M1.8 5h5.4M8.6 5h4.6" fill="none" stroke="#adadad" stroke-width="1.7"/></svg>
<div class="sb" style="top:61.9px">CultivatED Marketer Ep. 44 …</div>
</div>
<div class="a" style="left:605.500px;top:510px;width:448px;height:116px;background:rgba(255,255,255,.52)"></div>
<div class="a" style="left:1054px;top:80px;width:10.600px;height:546px;background:#fafafa"></div>
<svg class="a" style="left:1056px;top:82.200px;width:7.200px;height:5.800px" viewBox="0 0 14 10"><path d="M7 .5 13.800 9.800H.2z" fill="#808080"/></svg>
<svg class="a" style="left:1056px;top:619.800px;width:7.200px;height:5.600px" viewBox="0 0 14 10"><path d="M7 9.500 13.800 .2H.2z" fill="#757575"/></svg>
<div class="a" style="left:1056px;top:185px;width:7px;height:168.600px;border-radius:3.500px;background:#8d8d8d"></div>
<svg class="a" style="left:680px;top:515px;width:370px;height:111px" viewBox="0 0 370 111">
<defs>
<linearGradient id="g1" gradientUnits="userSpaceOnUse" x1="15" y1="30" x2="150" y2="85"><stop offset="0" stop-color="#fcba3f"/><stop offset=".5" stop-color="#f8992f"/><stop offset="1" stop-color="#ef6d2a"/></linearGradient>
<linearGradient id="g2" gradientUnits="userSpaceOnUse" x1="150" y1="25" x2="200" y2="90"><stop offset="0" stop-color="#f68b2e"/><stop offset="1" stop-color="#e3402b"/></linearGradient>
</defs>
<g font-family="'Liberation Sans',sans-serif" font-weight="bold" font-size="68">
<g fill="#8a8a8a" transform="translate(2.2,2.6)">
<text transform="scale(1.08,1)" x="11.77 40.48 79.27 114.55" y="67">spar</text>
<text transform="scale(1.1,1)" x="171.05 208.79 243.05 277.77" y="67">cade</text>
<polygon points="190.3 10.4 176.9 27.5 180.4 38 186.8 25.6"/>
<polygon points="169.5 68.7 175.5 66.8 180.4 88.2 176 82"/>
<polygon points="160.7 24 173.5 40.7 198.6 28.8 184.7 53.5 203 79.9 174.3 63.9 163.9 91 161.9 67 151.9 72.7 159.1 59 148.4 51.9 162.3 46.3"/>
</g>
<text transform="scale(1.08,1)" x="11.77 40.48 79.27 114.55" y="67" fill="url(#g1)">spar</text>
<text transform="scale(1.1,1)" x="171.05 208.79 243.05 277.77" y="67" fill="#dc3a2f">cade</text>
</g>
<polygon points="190.3 10.4 176.9 27.5 180.4 38 186.8 25.6" fill="#e2352b"/>
<polygon points="148 60.7 154.3 55.6 158.3 61.5" fill="#4b3fb0"/>
<polygon points="169.5 68.7 175.5 66.8 180.4 88.2 176 82" fill="#f8c23c"/>
<polygon points="160.7 24 173.5 40.7 198.6 28.8 184.7 53.5 203 79.9 174.3 63.9 163.9 91 161.9 67 151.9 72.7 159.1 59 148.4 51.9 162.3 46.3" fill="url(#g2)"/>
</svg>
</body>
</html>
